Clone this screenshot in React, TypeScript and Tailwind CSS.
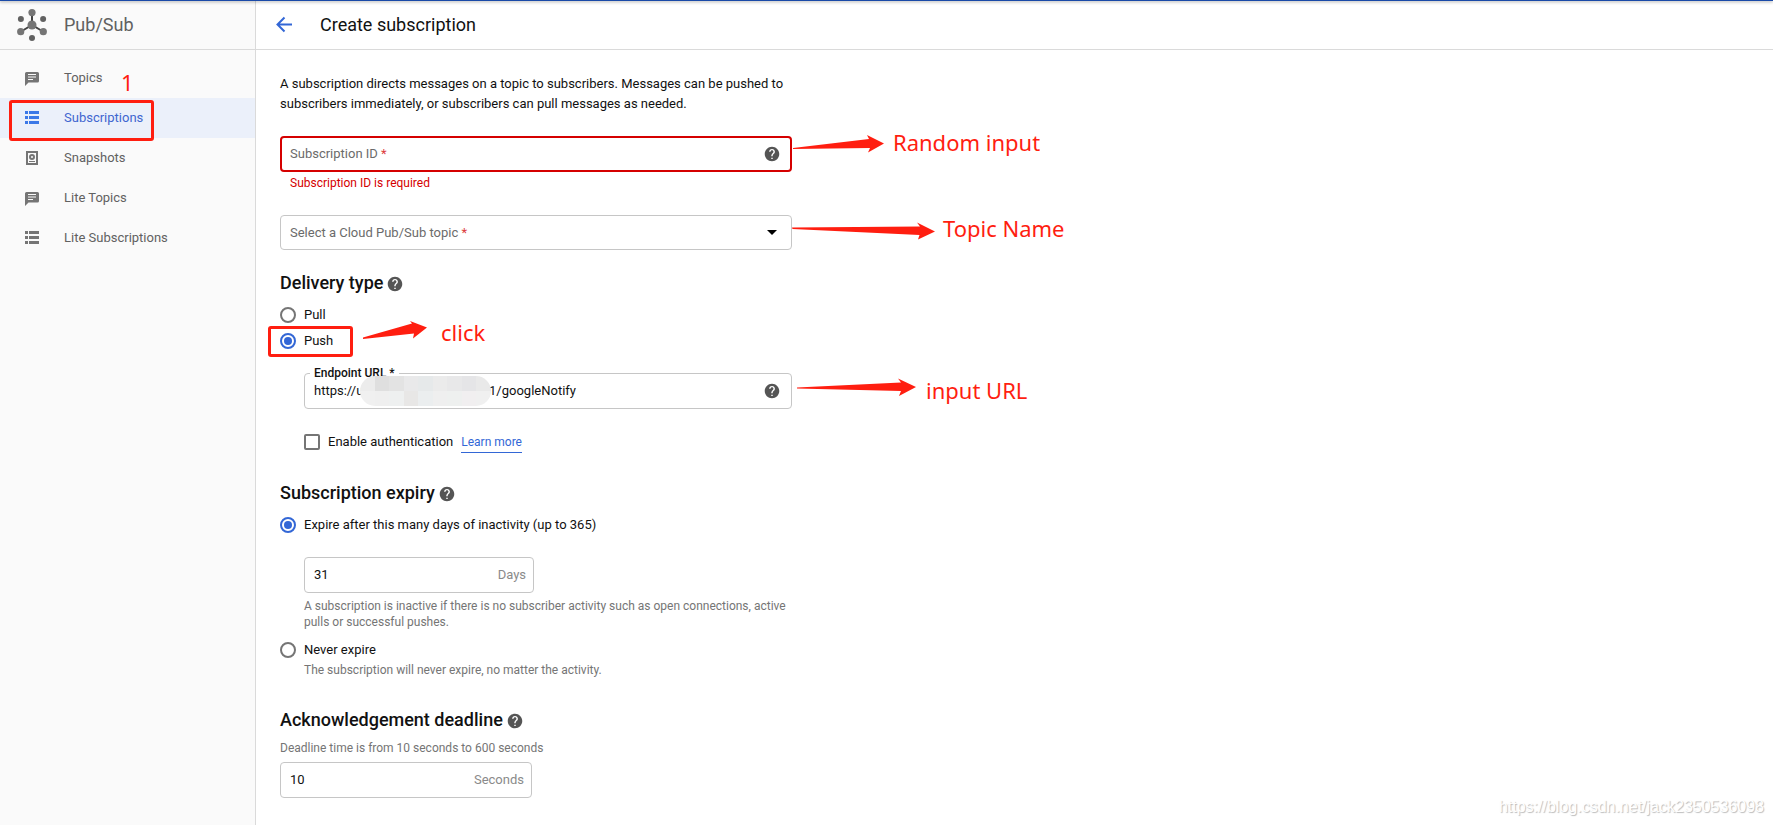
import { useState } from "react";
import type { ReactNode } from "react";

type IconName = "topic" | "list" | "snapshot";

const navItems: { label: string; icon: IconName }[] = [
  { label: "Topics", icon: "topic" },
  { label: "Subscriptions", icon: "list" },
  { label: "Snapshots", icon: "snapshot" },
  { label: "Lite Topics", icon: "topic" },
  { label: "Lite Subscriptions", icon: "list" },
];

const endpoint = "https://u" + " ".repeat(39) + "1/googleNotify";

const NavIcon = ({ name }: { name: IconName }) => {
  if (name === "topic") {
    return (
      <svg className="size-[18px]" viewBox="0 0 18 18" fill="currentColor">
        <path
          fillRule="evenodd"
          d="M3.500 3h11A1.500 1.500 0 0 1 16 4.500v7.500a1.500 1.500 0 0 1-1.500 1.500H5.500L2 17V4.500A1.500 1.500 0 0 1 3.500 3zM5 5v1h8V5zM5 7.500v1h8v-1zM5 10v1h5v-1z"
        />
      </svg>
    );
  }
  if (name === "list") {
    return (
      <svg className="size-[18px]" viewBox="0 0 18 18" fill="currentColor">
        <path d="M2 2h3v3H2zM6 2h10v3H6zM2 7h3v3H2zM6 7h10v3H6zM2 12h3v3H2zM6 12h10v3H6z" />
      </svg>
    );
  }
  return (
    <svg className="size-[18px]" viewBox="0 0 18 18" fill="none" stroke="currentColor">
      <rect x="4" y="3" width="10" height="12" strokeWidth="2" />
      <circle cx="9" cy="8" r="2" strokeWidth="2" />
      <path d="M6 12.500h6" />
    </svg>
  );
};

const PubSubLogo = () => (
  <svg className="size-8" viewBox="0 0 32 32" fill="#757575">
    <path d="M16 16V4M16 16L5 22.500M16 16l11 6.500" stroke="#424242" strokeWidth="2" />
    <circle cx="16" cy="16" r="4.500" />
    <circle cx="16" cy="3.600" r="3.600" />
    <circle cx="4.700" cy="22.700" r="3.600" />
    <circle cx="27.300" cy="22.700" r="3.600" />
    <circle cx="4.900" cy="10" r="3" fill="#616161" />
    <circle cx="27.100" cy="10" r="3" fill="#616161" />
    <circle cx="16" cy="29" r="3" fill="#616161" />
  </svg>
);

const HelpButton = ({ label }: { label: string }) => (
  <button type="button" aria-label={label} className="shrink-0 text-[#555]">
    <svg className="size-4" viewBox="1 1 22 22" fill="currentColor">
      <path d="M12 2C6.480 2 2 6.480 2 12s4.480 10 10 10 10-4.480 10-10S17.520 2 12 2zm1 17h-2v-2h2v2zm2.070-7.750l-.9.920C13.450 12.900 13 13.500 13 15h-2v-.5c0-1.100.45-2.100 1.170-2.830l1.240-1.260c.37-.36.59-.86.59-1.410 0-1.100-.9-2-2-2s-2 .9-2 2H8c0-2.210 1.790-4 4-4s4 1.790 4 4c0 .88-.36 1.680-.93 2.250z" />
    </svg>
  </button>
);

const SectionTitle = ({ children, help }: { children: ReactNode; help: string }) => (
  <div className="flex items-end gap-1">
    <h2 className="text-[18px] leading-6 font-medium">{children}</h2>
    <div className="flex pb-[3px]">
      <HelpButton label={help} />
    </div>
  </div>
);

type RadioProps = {
  name: string;
  label: string;
  checked: boolean;
  onChange: () => void;
};

const Radio = ({ name, label, checked, onChange }: RadioProps) => (
  <label className="flex items-center gap-2 leading-4">
    <input
      type="radio"
      name={name}
      checked={checked}
      onChange={onChange}
      className="size-4 appearance-none rounded-full border-2 border-[#757575] bg-clip-content p-[2px] checked:border-[#3367d6] checked:bg-[#3367d6]"
    />
    <span>{label}</span>
  </label>
);

const Sidebar = () => (
  <aside className="w-64 shrink-0 border-r border-[#dadada] bg-[#fafafa] text-[#616161]">
    <div className="flex h-[50px] items-center gap-4 border-b border-[#dadada] pl-4">
      <PubSubLogo />
      <span className="text-[18px]">Pub/Sub</span>
    </div>
    <nav className="pt-2">
      {navItems.map(({ label, icon }) => {
        const active = label === "Subscriptions";
        return (
          <a
            key={label}
            href="#"
            className={
              active
                ? "flex h-10 items-center gap-[23px] bg-[#ebf0fa] pl-[23px] text-[#3f66d0]"
                : "flex h-10 items-center gap-[23px] pl-[23px]"
            }
          >
            <span className={active ? "text-[#3b78e7]" : "text-[#757575]"}>
              <NavIcon name={icon} />
            </span>
            <span>{label}</span>
          </a>
        );
      })}
    </nav>
  </aside>
);

// grey blocks that cover the private part of the endpoint
const Mosaic = () => (
  <div className="absolute top-[2px] left-[55px] grid h-[30px] w-[131px] grid-cols-9 overflow-hidden rounded-full">
    <i className="bg-[#ececec]" />
    <i className="bg-[#dfdfdf]" />
    <i className="bg-[#e3e3e3]" />
    <i className="bg-[#e9e9ea]" />
    <i className="bg-[#e6e9ea]" />
    <i className="bg-[#ebebeb]" />
    <i className="bg-[#e8e8e9]" />
    <i className="bg-[#e5e5e7]" />
    <i className="bg-[#e9e9e9]" />
    <i className="bg-[#f0f0f0]" />
    <i className="bg-[#efefef]" />
    <i className="bg-[#eef0f0]" />
    <i className="bg-[#e8e7e6]" />
    <i className="bg-[#ebeeef]" />
    <i className="bg-[#efefef]" />
    <i className="bg-[#eef0ef]" />
    <i className="bg-[#f1eff0]" />
    <i className="bg-[#f0f0f0]" />
  </div>
);

const Annotations = () => (
  <div className="pointer-events-none absolute inset-0 font-['Noto_Sans',sans-serif] text-[22px] leading-8 text-[#ff1e10]">
    <svg className="absolute inset-0 size-full" fill="#ff1e10">
      <path d="M793 148l76-9-2-4 17 8.500-16 9 2-4.500-77 1z" />
      <path d="M792 227.500l128-1-3-4 18 9-17 8 1.500-4.500-127-6z" />
      <path d="M797 387.500l104-5-3-4 18 8.500-17 9 2-5-104-2.500z" />
      <path d="M363 337.500l49-14-2-2.500 17 6.500-14 11 1-5-51 5.500z" />
    </svg>
    <div className="absolute top-[100px] left-[9px] h-[41px] w-[145px] rounded-[3px] border-3 border-[#ff1e10]" />
    <div className="absolute top-[326px] left-[268px] h-[31px] w-[85px] rounded-[3px] border-3 border-[#ff1e10]" />
    <span className="absolute top-[66px] left-[121px]">1</span>
    <span className="absolute top-[126px] left-[893px]">Random input</span>
    <span className="absolute top-[212px] left-[943px]">Topic Name</span>
    <span className="absolute top-[316px] left-[441px]">click</span>
    <span className="absolute top-[374px] left-[926px]">input URL</span>
  </div>
);

const SubscriptionForm = () => {
  const [delivery, setDelivery] = useState("push");
  const [expiry, setExpiry] = useState("days");

  return (
    <form className="w-[536px] pt-6 pl-6" onSubmit={(e) => e.preventDefault()}>
      <p className="leading-5">
        A subscription directs messages on a topic to subscribers. Messages can be pushed to
        subscribers immediately, or subscribers can pull messages as needed.
      </p>

      <div className="relative mt-[22px] flex h-9 items-center rounded border-2 border-[#d50000] px-2">
        <label htmlFor="sub-id" className="pointer-events-none absolute left-2 text-[#6b6b6b]">
          Subscription ID <span className="text-[#dc3c3c]">*</span>
        </label>
        <input id="sub-id" className="min-w-0 flex-1 outline-none" />
        <div className="flex pr-[2px]">
          <HelpButton label="About subscription ID" />
        </div>
      </div>
      <p className="mt-[3px] pl-[10px] text-xs text-[#d50000]">Subscription ID is required</p>

      <div className="relative mt-6 flex h-[35px] items-center rounded border border-[#c6c6c6]">
        <label htmlFor="topic" className="pointer-events-none absolute left-[9px] text-[#6b6b6b]">
          Select a Cloud Pub/Sub topic <span className="text-[#dc3c3c]">*</span>
        </label>
        <select id="topic" className="h-full w-full appearance-none outline-none" defaultValue="">
          <option value="" />
        </select>
        <svg className="pointer-events-none absolute right-[14px] h-[5px] w-[10px]" viewBox="0 0 10 5">
          <path d="M0 0h10L5 5z" />
        </svg>
      </div>

      <div className="mt-[21px]">
        <SectionTitle help="About delivery type">Delivery type</SectionTitle>
      </div>
      <div className="mt-3 flex flex-col gap-[10px]">
        <Radio name="delivery" label="Pull" checked={delivery === "pull"} onChange={() => setDelivery("pull")} />
        <Radio name="delivery" label="Push" checked={delivery === "push"} onChange={() => setDelivery("push")} />
      </div>

      <div className="relative mt-6 ml-6 flex h-9 items-center rounded border border-[#c6c6c6] px-[9px]">
        <label htmlFor="endpoint" className="absolute -top-[9px] left-[5px] bg-white px-1 text-xs font-medium">
          Endpoint URL *
        </label>
        <input id="endpoint" className="min-w-0 flex-1 outline-none" defaultValue={endpoint} />
        <Mosaic />
        <div className="flex pr-[2px]">
          <HelpButton label="About endpoint URL" />
        </div>
      </div>

      <div className="mt-[23px] ml-6 flex h-5 items-center gap-2">
        <label className="flex items-center gap-2">
          <input type="checkbox" className="size-4 appearance-none rounded-[2px] border-2 border-[#757575]" />
          Enable authentication
        </label>
        <a href="#" className="border-b border-[#3367d6] text-xs leading-5 text-[#3367d6]">
          Learn more
        </a>
      </div>

      <div className="mt-[29px]">
        <SectionTitle help="About subscription expiry">Subscription expiry</SectionTitle>
      </div>
      <div className="mt-3">
        <Radio
          name="expiry"
          label="Expire after this many days of inactivity (up to 365)"
          checked={expiry === "days"}
          onChange={() => setExpiry("days")}
        />
      </div>
      <div className="mt-6 ml-6 flex h-9 w-[230px] items-center rounded border border-[#c6c6c6] pr-[7px] pl-[9px]">
        <input id="days" className="min-w-0 flex-1 outline-none" defaultValue="31" />
        <label htmlFor="days" className="text-[#8a8a8a]">
          Days
        </label>
      </div>
      <p className="mt-[5px] ml-6 text-xs text-[#757575]">
        A subscription is inactive if there is no subscriber activity such as open connections, active
        pulls or successful pushes.
      </p>
      <div className="mt-3">
        <Radio name="expiry" label="Never expire" checked={expiry === "never"} onChange={() => setExpiry("never")} />
      </div>
      <p className="mt-1 ml-6 text-xs text-[#757575]">
        The subscription will never expire, no matter the activity.
      </p>

      <div className="mt-[30px]">
        <SectionTitle help="About acknowledgement deadline">Acknowledgement deadline</SectionTitle>
      </div>
      <p className="mt-2 text-xs text-[#757575]">Deadline time is from 10 seconds to 600 seconds</p>
      <div className="mt-[6px] flex h-9 w-[252px] items-center rounded border border-[#c6c6c6] pr-[7px] pl-[9px]">
        <input id="deadline" className="min-w-0 flex-1 outline-none" defaultValue="10" />
        <label htmlFor="deadline" className="text-[#8a8a8a]">
          Seconds
        </label>
      </div>
    </form>
  );
};

const App = () => {
  return (
    <div className="relative flex min-h-screen bg-white font-[Roboto,sans-serif] text-[13px] leading-5 text-[#111]">
      <Sidebar />
      <main className="min-w-0 flex-1">
        <header className="flex h-[50px] items-center gap-[27px] border-b border-[#dadada] pl-[19px]">
          <button type="button" aria-label="Back" className="text-[#3367d6]">
            <svg className="size-[18px]" viewBox="0 0 18 18" fill="none" stroke="currentColor" strokeWidth="2">
              <path d="M17 8.500H3M9.500 1.500l-7 7 7 7" />
            </svg>
          </button>
          <h1 className="text-[18px]">Create subscription</h1>
        </header>
        <SubscriptionForm />
      </main>
      <div className="absolute inset-x-0 top-0 h-px bg-[#1a4aa8] shadow-[0_1px_3px_rgba(0,0,0,0.5)]" />
      <Annotations />
      <span className="absolute right-[9px] bottom-2 font-['Liberation_Sans',sans-serif] text-[16px] text-white [text-shadow:1px_1px_1px_#bbb]">
        https://blog.csdn.net/jack2350536098
      </span>
    </div>
  );
};

export default App;
